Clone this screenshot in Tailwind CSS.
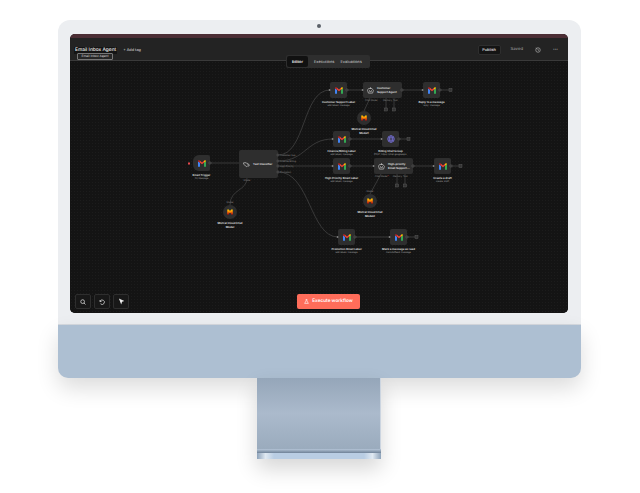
<!DOCTYPE html>
<html lang="en">
<head>
    <meta charset="UTF-8">
    <meta name="viewport" content="width=device-width, initial-scale=1.0">
    <title>Email Inbox Agent</title>
    <script src="https://cdn.jsdelivr.net/npm/@tailwindcss/browser@4"></script>
</head>
<body class="bg-white font-['Inter',sans-serif] [text-rendering:geometricPrecision]">
    <!-- shared icons -->
    <svg class="absolute w-0 h-0">
        <defs>
            <linearGradient id="mistralFill" x1="0" y1="0" x2="0" y2="1">
                <stop offset="0" stop-color="#ffd000"/>
                <stop offset="0.5" stop-color="#ff8205"/>
                <stop offset="1" stop-color="#e10500"/>
            </linearGradient>
        </defs>
        <symbol id="gmail" viewBox="0 0 24 20">
            <path d="M0 20V3l6 4.500V20z" fill="#4285f4"/>
            <path d="M24 20V3l-6 4.500V20z" fill="#34a853"/>
            <path d="M6 7.500V2l6 5 6-5v5.500L12 12.500z" fill="#ea4335"/>
            <path d="M0 3.500C0 .8 3 -.5 4.500 .8L6 2v5.500z" fill="#c5221f"/>
            <path d="M24 3.500C24 .8 21 -.5 19.500 .8L18 2v5.500z" fill="#fbbc04"/>
        </symbol>
        <symbol id="mistral" viewBox="0 0 24 22">
            <path d="M1 1h6l5 6 5-6h6v20h-6v-9l-5 5-5-5v9H1z" fill="url(#mistralFill)"/>
        </symbol>
        <symbol id="robot" viewBox="0 0 24 24">
            <path d="M12 2v3M7 5h10l5 7-3 9H5l-3-9zM8.500 12h.01M15.500 12h.01M9 16h6" fill="none" stroke="#dddddd" stroke-width="2" stroke-linecap="round" stroke-linejoin="round"/>
        </symbol>
        <symbol id="tags" viewBox="0 0 24 24">
            <path d="M2 6h9l8 8-6 6-11-9zM14 6l8 8-3 5" fill="none" stroke="#dddddd" stroke-width="2" stroke-linejoin="round"/>
        </symbol>
    </svg>

    <div class="relative w-[640px] h-[493px] overflow-hidden pt-[20px] pl-[58px]">
        <div class="w-[523px]">
            <!-- silver front with the screen -->
            <div class="relative z-10 h-[305px] rounded-t-[12px] bg-[#eceef1] border-b border-[#d5d9df] pt-[14px] px-[12px]">
                <div class="absolute top-[4px] left-[259px] w-[4px] h-[4px] rounded-full bg-[#5b6068]"></div>

                <div class="relative h-[279px] w-[498px] rounded-[5px] overflow-hidden bg-[#141414] flex flex-col">
                    <div class="h-[4px] bg-[#4c2e35]"></div>
                    <!-- top bar -->
                    <div class="h-[23px] shrink-0 bg-[#232323] border-b border-[#3a3a3a] flex items-center pl-[4px] pr-[10px] pt-[2px]">
                        <span class="bg-[#141414] px-[1px] text-[4.800px] leading-[7px] font-medium text-[#eeeeee]">Email Inbox Agent</span>
                        <span class="ml-[6px] text-[3.800px] font-medium text-[#cccccc]">+ Add tag</span>
                        <span class="ml-auto w-[23px] h-[10px] rounded-[2px] bg-[#141414] border border-[#2e2e2e] flex items-center justify-center text-[3.900px] font-semibold text-[#dddddd]">Publish</span>
                        <span class="ml-[10px] text-[4.200px] font-medium text-[#999999]">Saved</span>
                        <svg class="ml-[12px] w-[6px] h-[6px]" viewBox="0 0 24 24" fill="none" stroke="#bbbbbb" stroke-width="2.500"><circle cx="12" cy="12" r="9"/><path d="M12 7v5l3 3M3 4l4 2"/></svg>
                        <span class="ml-[12px] text-[5px] leading-none font-bold text-[#aaaaaa]">···</span>
                    </div>

                    <!-- canvas -->
                    <div class="relative flex-1 bg-[#141414] bg-[radial-gradient(#1c1c1c_0.6px,transparent_0.6px)] bg-[size:3px_3px]">
                        <!-- edges, offsets are canvas coordinates -->
                        <svg class="absolute inset-0 z-10" width="498" height="252" viewBox="0 0 498 252" fill="none" stroke="#505050" stroke-width="0.600">
                            <path d="M140 102H169"/>
                            <path d="M208 94C236 94 232 29 260 29"/>
                            <path d="M208 100C236 100 236 78 263 78"/>
                            <path d="M208 105H263"/>
                            <path d="M208 111C240 111 240 176 268 176"/>
                            <path d="M177 117C177 130 160 128 160 144"/>
                            <path d="M277 29H293M332 29H353M370 29H379"/>
                            <path d="M280 78H312M329 78H337"/>
                            <path d="M280 105H304M343 105H364M381 105H389"/>
                            <path d="M285 176H320M337 176H345"/>
                            <path d="M300 37L294 50M316 37V47M324 37V47"/>
                            <path d="M311 113L300 133M327 113V123M335 113V123"/>
                            <g fill="#141414" stroke="#777777" stroke-width="0.500">
                                <circle cx="140" cy="102" r="1.100"/>
                                <circle cx="208" cy="94" r="1"/><circle cx="208" cy="100" r="1"/><circle cx="208" cy="105" r="1"/><circle cx="208" cy="111" r="1"/>
                                <circle cx="277" cy="29" r="1.100"/><circle cx="332" cy="29" r="1.100"/><circle cx="370" cy="29" r="1.100"/>
                                <circle cx="280" cy="78" r="1.100"/><circle cx="329" cy="78" r="1.100"/>
                                <circle cx="280" cy="105" r="1.100"/><circle cx="343" cy="105" r="1.100"/><circle cx="381" cy="105" r="1.100"/>
                                <circle cx="285" cy="176" r="1.100"/><circle cx="337" cy="176" r="1.100"/>
                            </g>
                            <g fill="#333333" stroke="#666666" stroke-width="0.400">
                                <rect x="379" y="27.500" width="3" height="3"/><rect x="337" y="76.500" width="3" height="3"/>
                                <rect x="389" y="103.500" width="3" height="3"/><rect x="345" y="174.500" width="3" height="3"/>
                                <rect x="314.500" y="47" width="3" height="3"/><rect x="322.500" y="47" width="3" height="3"/>
                                <rect x="325.500" y="123" width="3" height="3"/><rect x="333.500" y="123" width="3" height="3"/>
                            </g>
                            <rect x="118" y="101.500" width="2" height="2" fill="#e5484d" stroke="none"/>
                            <g fill="#777777" stroke="none">
                                <rect x="258.800" y="28" width="1.500" height="2"/><rect x="291.800" y="28" width="1.500" height="2"/><rect x="351.800" y="28" width="1.500" height="2"/>
                                <rect x="261.800" y="77" width="1.500" height="2"/><rect x="310.800" y="77" width="1.500" height="2"/>
                                <rect x="261.800" y="104" width="1.500" height="2"/><rect x="302.800" y="104" width="1.500" height="2"/><rect x="362.800" y="104" width="1.500" height="2"/>
                                <rect x="266.800" y="175" width="1.500" height="2"/><rect x="318.800" y="175" width="1.500" height="2"/>
                            </g>
                        </svg>

                        <!-- Email Trigger -->
                        <div class="absolute left-[123px] top-[94px] w-[17px] h-[16px] rounded-l-[6px] rounded-r-[2px] bg-[#2e2e2e] flex items-center justify-center">
                            <svg class="w-[8px] h-[7px]"><use href="#gmail"/></svg>
                            <div class="absolute top-[18px] left-1/2 -translate-x-1/2 w-[50px] text-center text-[2.800px] leading-[4px] font-semibold text-[#e5e5e5]">Email Trigger<div class="text-[2.300px] font-normal text-[#999999]">On Message</div></div>
                        </div>

                        <!-- Text Classifier -->
                        <div class="absolute left-[169px] top-[89px] w-[39px] h-[28px] rounded-[2px] bg-[#2e2e2e] flex items-center gap-[3px] pl-[4px]">
                            <svg class="w-[7px] h-[7px] shrink-0"><use href="#tags"/></svg>
                            <span class="text-[2.800px] font-semibold text-[#e5e5e5] whitespace-nowrap">Text Classifier</span>
                            <div class="absolute left-[41px] top-[3px] text-[2.300px] leading-[5.500px] text-[#888888] whitespace-nowrap">Customer Sup<br>Finance/Billing<br>High Priority<br>Promotion</div>
                            <div class="absolute left-[1px] top-[29px] w-[14px] text-center text-[2.300px] text-[#888888] whitespace-nowrap">Model</div>
                        </div>

                        <!-- Mistral under classifier -->
                        <div class="absolute left-[153px] top-[144px] w-[14px] h-[14px] rounded-full bg-[#2e2e2e] flex items-center justify-center">
                            <svg class="w-[6px] h-[6px]"><use href="#mistral"/></svg>
                            <div class="absolute top-[-4px] left-1/2 -translate-x-1/2 text-[2.300px] leading-[3px] text-[#888888]">Model</div>
                            <div class="absolute top-[16px] left-1/2 -translate-x-1/2 w-[30px] text-center text-[2.800px] leading-[4px] font-semibold text-[#e5e5e5]">Mistral Cloud Chat Model</div>
                        </div>

                        <!-- Customer Support row -->
                        <div class="absolute left-[260px] top-[21px] w-[17px] h-[16px] rounded-[2px] bg-[#2e2e2e] flex items-center justify-center">
                            <svg class="w-[8px] h-[7px]"><use href="#gmail"/></svg>
                            <div class="absolute top-[18px] left-1/2 -translate-x-1/2 w-[60px] text-center text-[2.800px] leading-[4px] font-semibold text-[#e5e5e5]">Customer Support Label<div class="text-[2.300px] font-normal text-[#999999]">add labels: message</div></div>
                        </div>
                        <div class="absolute left-[293px] top-[21px] w-[39px] h-[16px] rounded-[2px] bg-[#2e2e2e] flex items-center gap-[3px] pl-[4px]">
                            <svg class="w-[7px] h-[7px] shrink-0"><use href="#robot"/></svg>
                            <span class="text-[2.800px] leading-[4px] font-semibold text-[#e5e5e5] whitespace-nowrap">Customer<br>Support Agent</span>
                            <div class="absolute top-[17px] left-[2px] text-[2.300px] text-[#888888] whitespace-nowrap">Chat Model</div>
                            <div class="absolute top-[17px] left-[20px] text-[2.300px] text-[#888888] whitespace-nowrap">Memory</div>
                            <div class="absolute top-[17px] left-[30px] text-[2.300px] text-[#888888] whitespace-nowrap">Tool</div>
                        </div>
                        <div class="absolute left-[353px] top-[21px] w-[17px] h-[16px] rounded-[2px] bg-[#2e2e2e] flex items-center justify-center">
                            <svg class="w-[8px] h-[7px]"><use href="#gmail"/></svg>
                            <div class="absolute top-[18px] left-1/2 -translate-x-1/2 w-[50px] text-center text-[2.800px] leading-[4px] font-semibold text-[#e5e5e5]">Reply to a message<div class="text-[2.300px] font-normal text-[#999999]">reply: message</div></div>
                        </div>
                        <div class="absolute left-[287px] top-[50px] w-[14px] h-[14px] rounded-full bg-[#2e2e2e] flex items-center justify-center">
                            <svg class="w-[6px] h-[6px]"><use href="#mistral"/></svg>
                            <div class="absolute top-[16px] left-1/2 -translate-x-1/2 w-[30px] text-center text-[2.800px] leading-[4px] font-semibold text-[#e5e5e5]">Mistral Cloud Chat Model1</div>
                        </div>

                        <!-- Finance row -->
                        <div class="absolute left-[263px] top-[70px] w-[17px] h-[16px] rounded-[2px] bg-[#2e2e2e] flex items-center justify-center">
                            <svg class="w-[8px] h-[7px]"><use href="#gmail"/></svg>
                            <div class="absolute top-[18px] left-1/2 -translate-x-1/2 w-[50px] text-center text-[2.800px] leading-[4px] font-semibold text-[#e5e5e5]">Finance/Billing Label<div class="text-[2.300px] font-normal text-[#999999]">add labels: message</div></div>
                        </div>
                        <div class="absolute left-[312px] top-[70px] w-[17px] h-[16px] rounded-[2px] bg-[#2e2e2e] flex items-center justify-center">
                            <svg class="w-[8px] h-[8px]" viewBox="0 0 24 24" fill="none" stroke="#7d77e8" stroke-width="2"><circle cx="12" cy="12" r="10"/><ellipse cx="12" cy="12" rx="4.500" ry="10"/><path d="M2 12h20M3.500 7h17M3.500 17h17"/></svg>
                            <div class="absolute top-[18px] left-1/2 -translate-x-1/2 w-[50px] text-center text-[2.800px] leading-[4px] font-semibold text-[#e5e5e5]">Billing Chat Group<div class="text-[2.300px] font-normal text-[#999999]">POST: https://chat.googleapis.</div></div>
                        </div>

                        <!-- High priority row -->
                        <div class="absolute left-[263px] top-[97px] w-[17px] h-[16px] rounded-[2px] bg-[#2e2e2e] flex items-center justify-center">
                            <svg class="w-[8px] h-[7px]"><use href="#gmail"/></svg>
                            <div class="absolute top-[18px] left-1/2 -translate-x-1/2 w-[50px] text-center text-[2.800px] leading-[4px] font-semibold text-[#e5e5e5]">High Priority Email Label<div class="text-[2.300px] font-normal text-[#999999]">add labels: message</div></div>
                        </div>
                        <div class="absolute left-[304px] top-[97px] w-[39px] h-[16px] rounded-[2px] bg-[#2e2e2e] flex items-center gap-[3px] pl-[4px]">
                            <svg class="w-[7px] h-[7px] shrink-0"><use href="#robot"/></svg>
                            <span class="text-[2.800px] leading-[4px] font-semibold text-[#e5e5e5] whitespace-nowrap">High-priority<br>Email Support...</span>
                            <div class="absolute top-[17px] left-[1px] text-[2.300px] text-[#888888] whitespace-nowrap">Chat Model<span class="text-[#e5484d]">*</span></div>
                            <div class="absolute top-[17px] left-[19px] text-[2.300px] text-[#888888] whitespace-nowrap">Memory</div>
                            <div class="absolute top-[17px] left-[29px] text-[2.300px] text-[#888888] whitespace-nowrap">Tool</div>
                        </div>
                        <div class="absolute left-[364px] top-[97px] w-[17px] h-[16px] rounded-[2px] bg-[#2e2e2e] flex items-center justify-center">
                            <svg class="w-[8px] h-[7px]"><use href="#gmail"/></svg>
                            <div class="absolute top-[18px] left-1/2 -translate-x-1/2 w-[50px] text-center text-[2.800px] leading-[4px] font-semibold text-[#e5e5e5]">Create a draft<div class="text-[2.300px] font-normal text-[#999999]">create: draft</div></div>
                        </div>
                        <div class="absolute left-[293px] top-[133px] w-[14px] h-[14px] rounded-full bg-[#2e2e2e] flex items-center justify-center">
                            <svg class="w-[6px] h-[6px]"><use href="#mistral"/></svg>
                            <div class="absolute top-[-4px] left-1/2 -translate-x-1/2 text-[2.300px] leading-[3px] text-[#888888]">Model</div>
                            <div class="absolute top-[16px] left-1/2 -translate-x-1/2 w-[30px] text-center text-[2.800px] leading-[4px] font-semibold text-[#e5e5e5]">Mistral Cloud Chat Model2</div>
                        </div>

                        <!-- Promotion row -->
                        <div class="absolute left-[268px] top-[168px] w-[17px] h-[16px] rounded-[2px] bg-[#2e2e2e] flex items-center justify-center">
                            <svg class="w-[8px] h-[7px]"><use href="#gmail"/></svg>
                            <div class="absolute top-[18px] left-1/2 -translate-x-1/2 w-[50px] text-center text-[2.800px] leading-[4px] font-semibold text-[#e5e5e5]">Promotion Email Label<div class="text-[2.300px] font-normal text-[#999999]">add labels: message</div></div>
                        </div>
                        <div class="absolute left-[320px] top-[168px] w-[17px] h-[16px] rounded-[2px] bg-[#2e2e2e] flex items-center justify-center">
                            <svg class="w-[8px] h-[7px]"><use href="#gmail"/></svg>
                            <div class="absolute top-[18px] left-1/2 -translate-x-1/2 w-[60px] text-center text-[2.800px] leading-[4px] font-semibold text-[#e5e5e5]">Mark a message as read<div class="text-[2.300px] font-normal text-[#999999]">markAsRead: message</div></div>
                        </div>

                        <!-- bottom controls -->
                        <div class="absolute left-[5px] bottom-[4px] flex gap-[3px]">
                            <div class="w-[16px] h-[15px] rounded-[2px] bg-[#181818] border border-[#2e2e2e] flex items-center justify-center">
                                <svg class="w-[6px] h-[6px]" viewBox="0 0 24 24" fill="none" stroke="#dddddd" stroke-width="3"><circle cx="10.500" cy="10.500" r="7.500"/><path d="M16 16l6 6"/></svg>
                            </div>
                            <div class="w-[16px] h-[15px] rounded-[2px] bg-[#181818] border border-[#2e2e2e] flex items-center justify-center">
                                <svg class="w-[6px] h-[6px]" viewBox="0 0 24 24" fill="none" stroke="#dddddd" stroke-width="3"><path d="M4 4v6h6M4 10a9 9 0 1 1 2 9"/></svg>
                            </div>
                            <div class="w-[16px] h-[15px] rounded-[2px] bg-[#181818] border border-[#2e2e2e] flex items-center justify-center">
                                <svg class="w-[7px] h-[7px]" viewBox="0 0 24 24" fill="#eeeeee"><path d="M3 2l19 8-8 3-3 9z"/></svg>
                            </div>
                        </div>
                        <div class="absolute left-[227px] bottom-[4px] w-[63px] h-[15px] rounded-[2px] bg-[#ff6d5a] flex items-center justify-center gap-[3px] text-[4.700px] font-semibold text-white">
                            <svg class="w-[5px] h-[5px]" viewBox="0 0 24 24" fill="none" stroke="#ffffff" stroke-width="3" stroke-linejoin="round"><path d="M9 2h6M10 2v7L3 21h18L14 9V2"/></svg>
                            Execute workflow
                        </div>
                    </div>

                    <!-- tabs and tooltip over the top bar -->
                    <div class="absolute left-[216px] top-[21px] z-20 h-[13px] w-[84px] rounded-[2px] bg-[#2e2e2e] flex items-center gap-[6px] px-[1px] text-[3.900px] font-medium text-[#bbbbbb]">
                        <span class="h-[11px] w-[21px] rounded-[2px] bg-[#111111] flex items-center justify-center font-semibold text-[#eeeeee]">Editor</span>
                        <span>Executions</span>
                        <span>Evaluations</span>
                    </div>
                    <div class="absolute left-[7px] top-[19px] z-20 h-[7px] w-[36px] rounded-[1px] bg-[#262626] border border-[#777777] flex items-center justify-center text-[3.200px] text-[#dddddd]">Email Inbox Agent</div>
                </div>
            </div>

            <!-- blue chin -->
            <div class="relative z-10 h-[53px] rounded-b-[10px] bg-[#adbfd2] shadow-[0_10px_22px_rgba(0,0,0,0.14)]"></div>

            <!-- stand -->
            <div class="relative z-20 ml-[199px] w-[124px] shadow-[0_10px_20px_rgba(0,0,0,0.16)]">
                <div class="h-[71px] bg-gradient-to-b from-[#95a6b9] via-[#abbacc] to-[#9aabbd] border-r border-[#ccd5e0]"></div>
                <div class="h-[4px] bg-gradient-to-b from-[#b5c5d7] to-[#6f8298]"></div>
                <div class="flex items-stretch justify-between h-[6px] bg-[#b9cde3]">
                    <div class="w-[17px] bg-gradient-to-r from-[#8ea3ba] via-[#e0e9f2] to-[#b9cde3]"></div>
                    <div class="w-[17px] bg-gradient-to-l from-[#8ea3ba] via-[#e0e9f2] to-[#b9cde3]"></div>
                </div>
            </div>
        </div>
    </div>
</body>
</html>
